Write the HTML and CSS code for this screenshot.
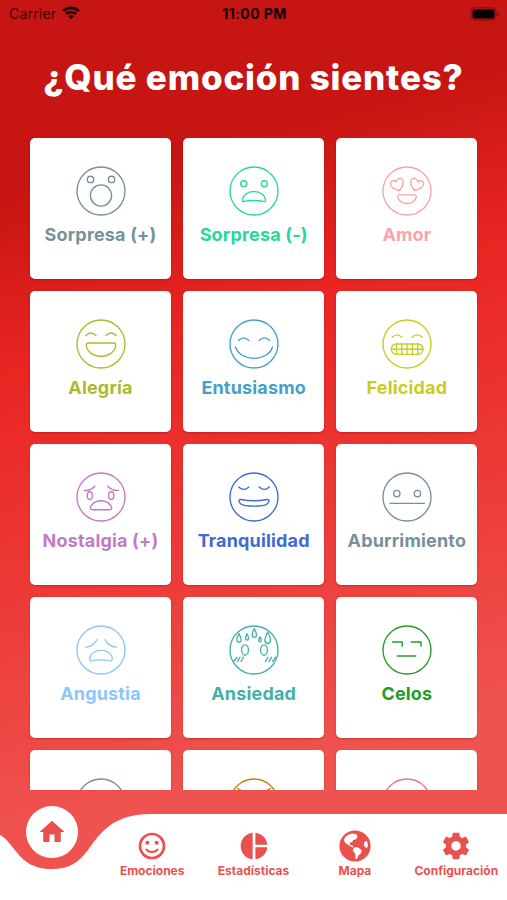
FILE: index.html
```html
<!DOCTYPE html>
<html lang="es">
<head>
<meta charset="utf-8">
<title>Emociones</title>
<link rel="stylesheet" href="styles.css">
</head>
<body>
<div class="app">
  <header class="status">
    <div class="status-left"><span class="carrier">Carrier</span>
      <svg class="wifi" viewBox="0 0 18 14"><path d="M.3 4.2C5.2-.7 12.800-.7 17.700 4.200L15.900 6C12 2.200 6 2.200 2.100 6zM3.200 7.100C6.500 4 11.500 4 14.800 7.100L13 8.900C10.700 6.900 7.300 6.900 5 8.900zM6.100 10C7.800 8.600 10.200 8.600 11.900 10L9 13z"/></svg>
    </div>
    <span class="clock">11:00 PM</span>
    <div class="status-right">
      <svg class="battery" viewBox="0 0 30 14"><rect class="battery-shell" x="1" y=".9" width="25" height="12" rx="3.500"/><rect x="2.500" y="2.400" width="22" height="9" rx="2"/><path class="battery-tip" d="M27.500 5v4q1.500-.5 1.500-2t-1.500-2z"/></svg>
    </div>
  </header>
  <h1 class="title">¿Qué emoción sientes?</h1>
  <main class="grid">
    <article class="card gray">
      <svg class="face" viewBox="0 0 50 50"><circle cx="25" cy="25" r="24"/><circle cx="14.500" cy="13.400" r="3.200"/><circle cx="35.500" cy="13.400" r="3.200"/><circle cx="25" cy="29.500" r="10.600"/></svg>
      <span class="label">Sorpresa (+)</span>
    </article>
    <article class="card mint">
      <svg class="face" viewBox="0 0 50 50"><circle cx="25" cy="25" r="24"/><circle cx="14.700" cy="17.700" r="3"/><circle cx="35.300" cy="17.700" r="3"/><path d="M13.500 34.500C13.500 29 19 25.500 25 25.500S36.500 29 36.500 34.500C36.500 36 35.500 35.800 34.500 35.400Q25 33.500 15.500 35.400C14.500 35.800 13.500 36 13.500 34.500z"/></svg>
      <span class="label">Sorpresa (-)</span>
    </article>
    <article class="card pink">
      <svg class="face" viewBox="0 0 50 50"><circle cx="25" cy="25" r="24"/><path d="M17.500 24.500C13 23.500 8.500 21 8.500 17.500C8.500 14.500 12.500 13.500 14 16C14.500 12.500 19 11 20.700 14C22 17 20 21.500 17.500 24.500z"/><path d="M32.500 24.500C37 23.500 41.500 21 41.500 17.500C41.500 14.500 37.500 13.500 36 16C35.500 12.500 31 11 29.300 14C28 17 30 21.500 32.500 24.500z"/><path d="M17.500 28.800H32.500Q34.500 28.800 34.300 31C33.500 35 29.500 37.500 25 37.500S16.500 35 15.700 31Q15.500 28.800 17.500 28.800z"/></svg>
      <span class="label">Amor</span>
    </article>
    <article class="card olive">
      <svg class="face" viewBox="0 0 50 50"><circle cx="25" cy="25" r="24"/><path d="M9.800 16.500Q15 11.500 20 16.500M30 16.500Q35 11.500 40.200 16.500M12.500 24H37.500Q40 24 39.700 26.500C39 33 32.500 37.400 25 37.400S11 33 10.300 26.500Q10 24 12.500 24z"/></svg>
      <span class="label">Alegría</span>
    </article>
    <article class="card blue">
      <svg class="face" viewBox="0 0 50 50"><circle cx="25" cy="25" r="24"/><path d="M9.500 21.500Q14.500 16.300 19.800 21.500M30.200 21.500Q35.500 16.300 40.500 21.500M6.500 28C8.500 35 16.500 39.300 25 39.300S41.500 35 43.500 28"/></svg>
      <span class="label">Entusiasmo</span>
    </article>
    <article class="card lime">
      <svg class="face" viewBox="0 0 50 50"><circle cx="25" cy="25" r="24"/><path d="M10 18.200Q15 13.500 20 18.200M30 18.200Q35 13.500 40.300 18.200"/><rect x="9.300" y="25" width="31.700" height="10.300" rx="5"/><path d="M9.300 30.200H41M14.500 25V35.300M19.800 25V35.300M25.100 25V35.300M30.400 25V35.300M35.700 25V35.300"/></svg>
      <span class="label">Felicidad</span>
    </article>
    <article class="card orchid">
      <svg class="face" viewBox="0 0 50 50"><circle cx="25" cy="25" r="24"/><path d="M8 18.400Q14.500 19 18.800 14.200M42.500 18.400Q36 19 31.700 14.200"/><ellipse cx="13.800" cy="23.600" rx="2.600" ry="3.900"/><ellipse cx="35.200" cy="23.600" rx="2.600" ry="3.900"/><path d="M16.500 37.700C13.500 37.700 14 35 15.800 33C20 27.300 30 27.300 34.200 33C36 35 36.500 37.700 33.500 37.700z"/></svg>
      <span class="label">Nostalgia (+)</span>
    </article>
    <article class="card royal">
      <svg class="face" viewBox="0 0 50 50"><circle cx="25" cy="25" r="24"/><path d="M9.700 15Q14.700 19.800 19.800 15M30.200 15Q35.300 19.800 40.300 15M12 27.500Q25 30 38 27.500C41.500 27 40.500 32.800 33.500 33.700Q25 34.700 16.500 33.700C9.500 32.800 8.500 27 12 27.500z"/></svg>
      <span class="label">Tranquilidad</span>
    </article>
    <article class="card gray">
      <svg class="face" viewBox="0 0 50 50"><circle cx="25" cy="25" r="24"/><circle cx="14.800" cy="21.600" r="3.200"/><circle cx="35.400" cy="21.600" r="3.200"/><path d="M8 31.300H42.500"/></svg>
      <span class="label">Aburrimiento</span>
    </article>
    <article class="card sky">
      <svg class="face" viewBox="0 0 50 50"><circle cx="25" cy="25" r="24"/><path d="M9.500 22C14 22.500 19 19 21 14.500M29 14.500C31 19 36 22.500 40.500 22M15.500 36C11.500 36 14 25.400 25 25.400S38.500 36 34.500 36C31 34.500 19 34.500 15.500 36z"/></svg>
      <span class="label">Angustia</span>
    </article>
    <article class="card teal">
      <svg class="face" viewBox="0 0 50 50"><circle cx="25" cy="25" r="24"/><path d="M10 8.500Q7.500 14 7.900 15.700A2.200 2.200 0 0 0 12.100 15.700Q12.500 14 10 8.500zM18 8.800Q16.300 12 16.500 13.500A1.500 1.500 0 0 0 19.500 13.500Q19.700 12 18 8.800zM25.300 3.500Q23 8 23.200 10.200A2.100 2.100 0 0 0 27.400 10.200Q27.600 8 25.300 3.500zM31 12Q29.500 14 29.800 15.500A1.200 1.200 0 0 0 32.200 15.500Q32.500 14 31 12zM38.700 7Q35.700 13 36 15.800A2.700 2.700 0 0 0 41.400 15.800Q41.700 13 38.700 7z"/><ellipse cx="16" cy="25" rx="3.400" ry="5.200"/><ellipse cx="35" cy="25" rx="3.400" ry="5.200"/><path d="M4.500 36.500L8 32.300M8.500 36.500L11 32.300M12 36.500L14.500 32.300M36.500 36.500L39 32.300M40 36.500L42.500 32.300M43.500 36.500L46.500 32.300"/></svg>
      <span class="label">Ansiedad</span>
    </article>
    <article class="card green">
      <svg class="face" viewBox="0 0 50 50"><circle cx="25" cy="25" r="24"/><path d="M10.500 17H20.300V21.300M29.200 17H39V21.300M15.300 31H33.800"/></svg>
      <span class="label">Celos</span>
    </article>
    <article class="card gray"><svg class="face" viewBox="0 0 50 50"><circle cx="25" cy="25" r="24"/></svg></article>
    <article class="card gold"><svg class="face" viewBox="0 0 50 50"><circle cx="25" cy="25" r="24"/><path d="M8.500 10.500L19 16M41.500 10.500L31 16"/></svg></article>
    <article class="card rose"><svg class="face" viewBox="0 0 50 50"><circle cx="25" cy="25" r="24"/></svg></article>
  </main>
  <footer class="tabbar">
    <svg class="wave" viewBox="0 0 507 86"><path d="M0 21C5 23 9 29 14 35C24 48 33 55 52 55C70 55 79 48 88 36C101 18 113 0 152 0H507V86H0z"/></svg>
    <div class="home"><svg viewBox="0 0 24 24"><path d="M10 20v-6h4v6h5v-8h3L12 3 2 12h3v8z"/></svg></div>
    <nav class="tabs">
      <div class="tab">
        <svg class="tab-icon" viewBox="0 0 24 24"><circle class="line" cx="12" cy="12" r="9"/><circle cx="8.500" cy="9.500" r="1.500"/><circle cx="15.500" cy="9.500" r="1.500"/><path class="smile" d="M7.500 14.300C9.200 17.300 14.800 17.300 16.500 14.300"/></svg>
        <span>Emociones</span>
      </div>
      <div class="tab">
        <svg class="tab-icon" viewBox="0 0 24 24"><path d="M11 2v20c-5.070-.5-9-4.790-9-10s3.930-9.500 9-10zm2.030 0v8.990H22c-.47-4.740-4.240-8.520-8.970-8.990zm0 11.010V22c4.740-.47 8.500-4.250 8.970-8.990h-8.970z"/></svg>
        <span>Estadísticas</span>
      </div>
      <div class="tab">
        <svg class="tab-icon" viewBox="0 0 32 32"><circle cx="16" cy="16" r="15.600"/><path class="land" d="M4.800 9.500C6.500 6 10 3.800 14 3.600L17.500 4.500 18.600 6.800 16.500 9.500 14 10 13.400 12 11 12.600 10.700 14.800 13.500 15.500 14.500 17.500 12 16.800 8.500 14.500 6 12.800zM15 17.500L18.500 17.300 22.800 20.200 21.600 23.800 19.300 25.500 18 29 16.500 28.600 16.200 23.800 13.800 20.500zM25.200 12.200L27.500 10.800 28.800 13.500 28.700 17 27.200 18.200 25 15.500z"/></svg>
        <span>Mapa</span>
      </div>
      <div class="tab">
        <svg class="tab-icon" viewBox="0 0 24 24"><path d="M19.430 12.980c.04-.32.07-.64.07-.98s-.03-.66-.07-.98l2.110-1.650c.19-.15.24-.42.12-.64l-2-3.460c-.12-.22-.39-.3-.61-.22l-2.490 1c-.52-.4-1.080-.73-1.690-.98l-.38-2.650C14.460 2.180 14.250 2 14 2h-4c-.25 0-.46.18-.49.42l-.38 2.650c-.61.25-1.170.59-1.690.98l-2.490-1c-.23-.09-.49 0-.61.22l-2 3.460c-.13.22-.07.49.12.64l2.110 1.650c-.04.32-.07.65-.07.980s.03.660.07.980l-2.110 1.650c-.19.15-.24.42-.12.64l2 3.460c.12.22.39.3.61.22l2.490-1c.52.4 1.080.73 1.690.98l.38 2.650c.03.24.24.42.49.42h4c.25 0 .46-.18.49-.42l.38-2.650c.61-.25 1.170-.59 1.690-.98l2.490 1c.23.09.49 0 .61-.22l2-3.460c.12-.22.07-.49-.12-.64l-2.110-1.650zM12 15.500c-1.930 0-3.500-1.570-3.500-3.500s1.570-3.500 3.500-3.500 3.500 1.570 3.500 3.500-1.570 3.500-3.500 3.500z"/></svg>
        <span>Configuración</span>
      </div>
    </nav>
  </footer>
</div>
</body>
</html>
```
FILE: styles.css
```css
* { box-sizing: border-box; }
body { margin: 0; font-family: Inter, "Liberation Sans", sans-serif; }
svg { display: block; }
.app {
  width: 507px; height: 900px; overflow: hidden;
  display: flex; flex-direction: column;
  background: linear-gradient(165deg, #c61512 0%, #c61512 19%, #e92522 36%, #ec3835 56%, #ef5350 82%);
}
.status {
  height: 28px; flex: none; padding: 0 7px 0 9px;
  display: grid; grid-template-columns: 1fr auto 1fr; align-items: center;
  color: #160202; font-size: 14px; line-height: 28px;
}
.status-left { display: flex; align-items: center; gap: 6px; color: #3a0504; }
.carrier { letter-spacing: .2px; }
.wifi { width: 18px; height: 14px; fill: #160202; margin-top: -2px; }
.clock { font-weight: 700; letter-spacing: .45px; }
.status-right { display: flex; justify-content: flex-end; }
.battery { width: 30px; height: 14px; margin-top: -1px; }
.battery-shell { fill: none; stroke: #7d0d0b; stroke-width: 1; }
.battery-tip { fill: #7d0d0b; }
.title {
  margin: 0; height: 110px; padding-top: 28px; flex: none;
  text-align: center; color: #fff; font-size: 35px; line-height: 42px; font-weight: 800; white-space: nowrap;
  letter-spacing: .8px;
}
.grid {
  height: 652px; flex: none; overflow: hidden; padding: 0 29px 0 30px;
  display: grid; grid-template-columns: repeat(3, 141px); grid-auto-rows: 141px;
  column-gap: 12.200px; row-gap: 12.100px;
}
.card {
  background: #fff; border-radius: 5px; padding-top: 27.500px;
  box-shadow: 0 1px 2px rgba(90, 0, 0, .3);
  display: flex; flex-direction: column; align-items: center;
}
.face { width: 50px; height: 50px; flex: none; fill: none; stroke: currentColor; stroke-width: 1.350; stroke-linecap: round; stroke-linejoin: round; }
.label { margin-top: 7px; font-size: 18px; line-height: 24px; font-weight: 700; white-space: nowrap; letter-spacing: .17px; }
.gray { color: #78909c; }
.mint { color: #26d99a; }
.pink { color: #faa3a8; }
.olive { color: #afb92b; }
.blue { color: #469fca; }
.lime { color: #cbcc1d; }
.orchid { color: #c479c5; }
.royal { color: #4169d5; }
.sky { color: #8bc7fa; }
.teal { color: #45afaa; }
.green { color: #259b28; }
.gold { color: #b8860b; }
.rose { color: #e47780; }
.tabbar { height: 110px; flex: none; position: relative; display: flex; align-items: flex-start; }
.wave { position: absolute; left: 0; top: 24px; width: 507px; height: 86px; fill: #fff; }
.home {
  position: relative; flex: none; width: 52px; height: 52px; margin: 16px 24px 0 25.500px;
  border-radius: 50%; background: #fff; display: grid; place-items: center;
}
.home svg { width: 30px; height: 30px; fill: #ea504d; }
.tabs { position: relative; flex: 1; display: grid; grid-template-columns: repeat(4, 1fr); padding-top: 40px; }
.tab { display: flex; flex-direction: column; align-items: center; color: #ea504d; font-size: 12px; line-height: 16px; font-weight: 700; white-space: nowrap; }
.tab-icon { width: 32px; height: 32px; fill: currentColor; margin-bottom: 1px; }
.line { fill: none; stroke: currentColor; stroke-width: 2; }
.smile { fill: none; stroke: currentColor; stroke-width: 1.500; }
.land { fill: #fff; }
```
